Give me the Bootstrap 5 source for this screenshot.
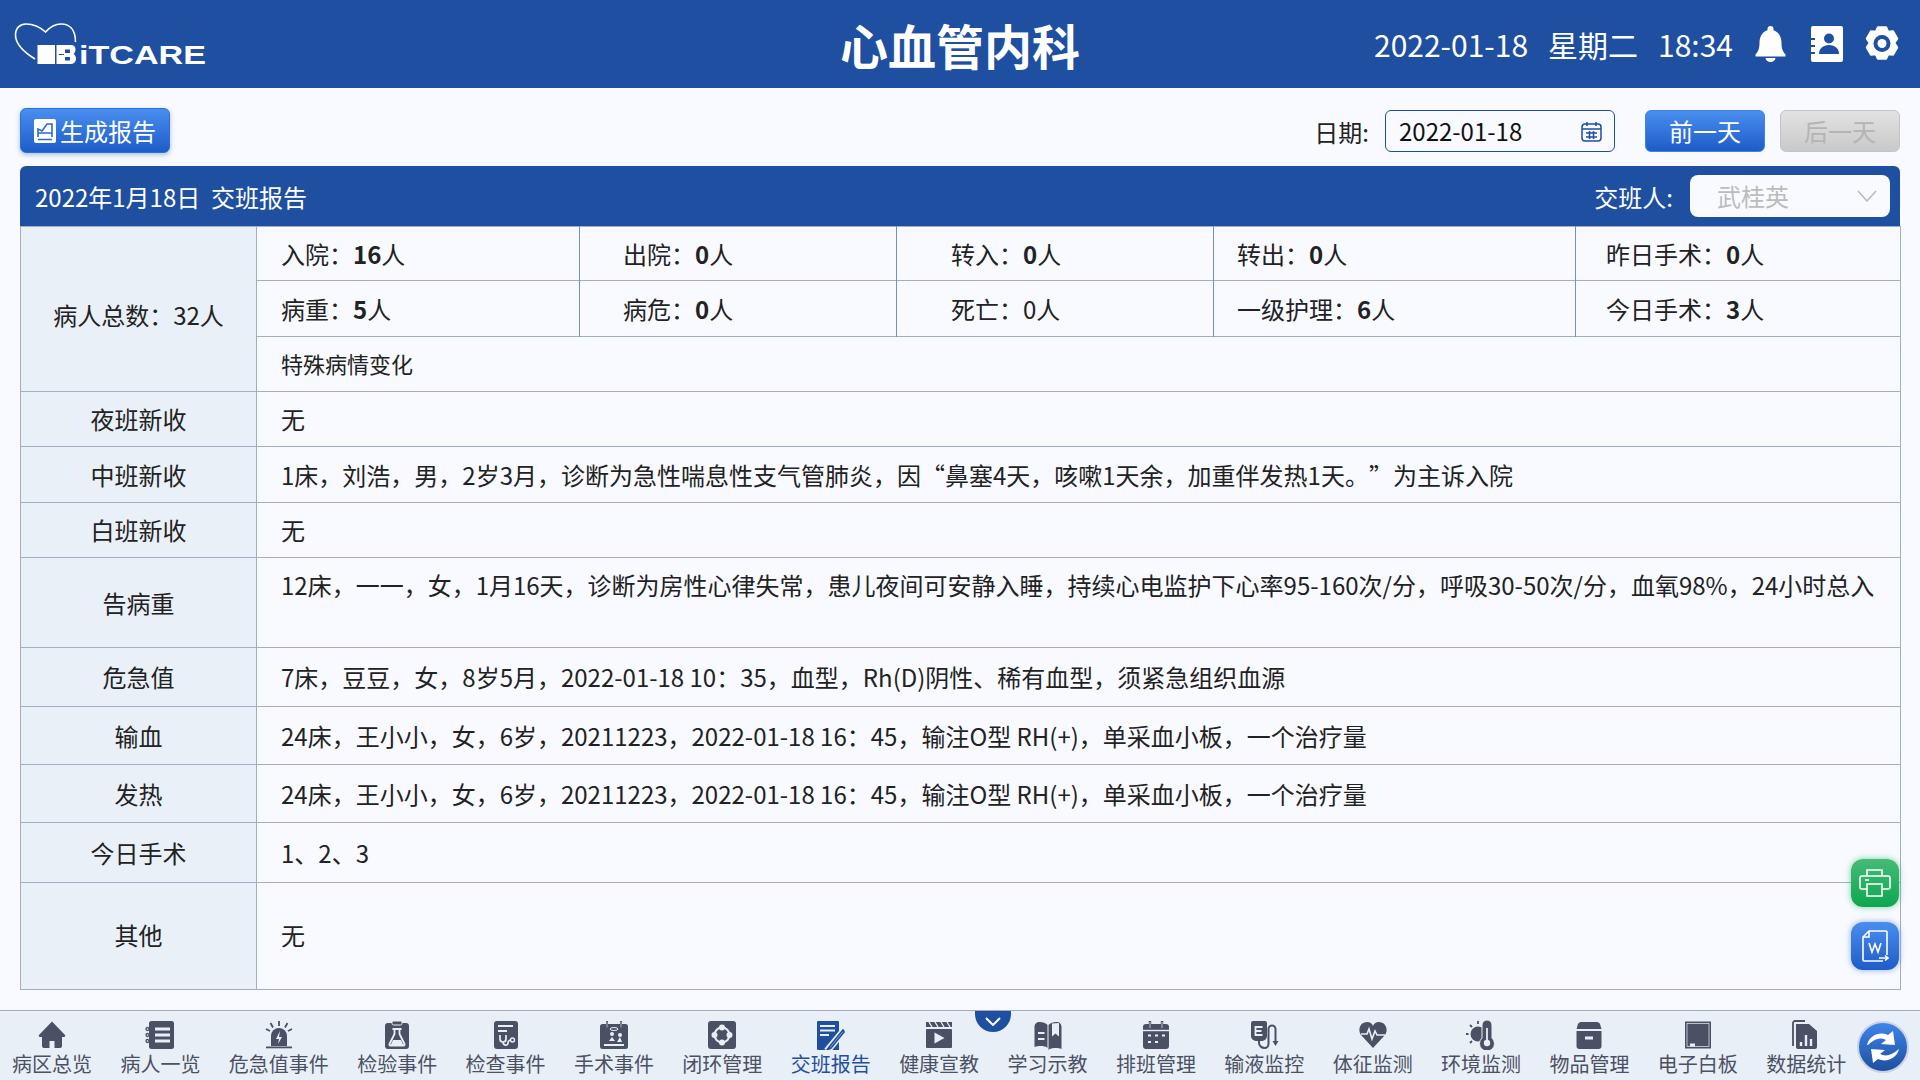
<!DOCTYPE html>
<html lang="zh-CN">
<head>
  <meta charset="UTF-8" />
  <meta name="viewport" content="width=device-width, initial-scale=1.0"/>
  <title>交班报告</title>
  <link href="https://cdn.jsdelivr.net/npm/bootstrap@5.3.0/dist/css/bootstrap.min.css" rel="stylesheet"/>
  <style>
    html, body {
      height: 100%;
    }

    body {
      font-family: "Noto Sans CJK SC", "Noto Sans", sans-serif;
      background-color: #f8faff;
      color: #222;
      font-size: 24px;
      overflow: hidden;
      text-spacing-trim: space-all;
    }

    .app-frame {
      width: 1920px;
      height: 1080px;
    }

    .top-bar {
      height: 88px;
      background-color: #1f4fa0;
      color: #fff;
      position: relative;
    }

    .logo-mark {
      display: block;
      position: absolute;
      left: 0;
      top: 0;
    }

    .page-title {
      font-size: 48px;
      font-weight: 700;
      line-height: 88px;
      width: 100%;
      text-align: center;
    }

    .top-info {
      position: absolute;
      right: 20px;
      top: 0;
      height: 88px;
      font-size: 30px;
    }

    .gap-bell { margin-left: 22px; }
    .gap-card { margin-left: 24px; }
    .gap-gear { margin-left: 21px; }

    .tool-row {
      height: 78px;
      padding: 20px 20px 0;
    }

    .report-btn {
      width: 150px;
      height: 45px;
      padding: 0;
      border: 1px solid #2c6fd8;
      border-radius: 6px;
      color: #fff;
      font-size: 24px;
      line-height: 1;
      background: linear-gradient(#4a8eef, #1c5cc8);
      box-shadow: 0 2px 5px rgba(30, 80, 160, .35);
    }

    .day-group {
      margin-top: 2px;
    }

    .day-label {
      padding-top: 2px;
    }

    .day-btn {
      width: 120px;
      height: 42px;
      padding: 0;
      border-radius: 6px;
      font-size: 24px;
      line-height: 1;
      color: #fff;
      border: 1px solid #3f83e6;
      background: linear-gradient(#4a8eef, #1c5cc8);
    }

    .day-btn:disabled {
      opacity: 1;
      color: #b4b4b4;
      border-color: #c4c4c4;
      background: linear-gradient(#e2e2e2, #c9c9c9);
    }

    .gap-prev { margin-left: 30px; }
    .gap-next { margin-left: 15px; }

    .date-box {
      position: relative;
      width: 230px;
      margin-left: 16px;
    }

    .date-box .form-control {
      height: 42px;
      padding: 0 0 2px 13px;
      font-size: 24px;
      color: #111;
      background-color: #f8faff;
      border: 1px solid #1f4fa0;
      border-radius: 6px;
    }

    .date-box svg {
      position: absolute;
      right: 13px;
      top: 11px;
    }

    .report-panel {
      margin: 0 20px;
    }

    .panel-head {
      height: 60px;
      padding: 0 10px 0 15px;
      background-color: #1f4fa0;
      border-radius: 6px 6px 0 0;
      color: #fff;
    }

    .head-label {
      padding-top: 2px;
    }

    .person-box {
      width: 200px;
      height: 42px;
      padding: 0 13px 0 27px;
      margin-left: 17px;
      color: #bcbcbc;
      background-color: #f8faff;
      border-radius: 8px;
    }

    .shift-table {
      table-layout: fixed;
      width: 1880px;
      margin: 0;
      font-size: 24px;
      --bs-table-bg: transparent;
      --bs-table-border-color: #a2aec4;
      --bs-table-color: #222;
    }

    .shift-table > tbody > tr > * {
      padding: 0 24px;
      vertical-align: middle;
      border-color: #a2aec4;
      line-height: 1.3;
    }

    .shift-table > tbody > tr > th {
      background-color: #e9f0f8;
      font-weight: 400;
      text-align: center;
      padding: 0;
    }

    .shift-table > tbody > tr > th.total-cell {
      padding-top: 12px;
    }

    .shift-table b {
      font-weight: 700;
    }

    .shift-table td.split {
      border-right-color: #6e92cb;
    }

    .shift-table > tbody > tr > td.pad-two { padding-left: 43px; }
    .shift-table > tbody > tr > td.pad-three { padding-left: 54px; }
    .shift-table > tbody > tr > td.pad-four { padding-left: 23px; }
    .shift-table > tbody > tr > td.pad-five { padding-left: 30px; }

    .shift-table > tbody > tr > td.note-cell {
      font-size: 22px;
      padding-bottom: 2px;
    }

    .shift-table > tbody > tr > td.top-cell {
      vertical-align: top;
      padding-top: 11px;
    }

    .shift-table > tbody > tr.last-row > * {
      padding-bottom: 3px;
    }

    .h-54 { height: 54px; }
    .h-55 { height: 55px; }
    .h-56 { height: 56px; }
    .h-58 { height: 58px; }
    .h-59 { height: 59px; }
    .h-60 { height: 60px; }
    .h-90 { height: 90px; }
    .h-107 { height: 107px; }

    .side-btn {
      position: absolute;
      left: 1851px;
      width: 48px;
      height: 48px;
      border-radius: 12px;
    }

    .side-print {
      top: 859px;
      background: linear-gradient(#45bb77, #0ea650);
      box-shadow: 0 0 6px rgba(20, 170, 90, .55);
    }

    .side-word {
      top: 922px;
      background: linear-gradient(#4a8eef, #1e5cc9);
      box-shadow: 0 0 6px rgba(50, 110, 220, .55);
    }

    .bottom-bar {
      position: absolute;
      left: 0;
      top: 1010px;
      width: 1920px;
      height: 70px;
      padding: 9px 0 0 12px;
      gap: 28.4px;
      background-color: #e8eff7;
      border-top: 1px solid #a2aac2;
    }

    .dock-item {
      color: #4b5164;
      font-size: 20px;
      line-height: 28px;
      white-space: nowrap;
    }

    .dock-item svg {
      display: block;
      margin: 0 auto;
    }

    .dock-item.current {
      color: #1f4fa0;
    }

    .drop-tab {
      position: absolute;
      left: 975px;
      top: 0;
      width: 36px;
      height: 21px;
      background-color: #1f4fa0;
      border-radius: 0 0 18px 18px;
    }

    .refresh-ball {
      position: absolute;
      left: 1857px;
      top: 10px;
      width: 52px;
      height: 52px;
      border-radius: 50%;
      border: 2px solid #c9d3e6;
      background: linear-gradient(#3d85e8, #1f4fa0);
    }
  </style>
</head>
<body>
  <div class="app-frame position-relative">
    <header class="top-bar">
      <svg class="logo-mark" width="215" height="80" viewBox="0 0 215 80">
        <path d="M35 59C22 51 15.500 44 15.500 35C15.500 28 20 24 26 24C34 24 40 27 45.500 32C50 27 54 24 61 24C69 24 75.500 29 75.500 42" fill="none" stroke="#fff" stroke-width="1.600"/>
        <rect x="37.500" y="45" width="17.500" height="19" fill="#fff"/>
        <path fill="#fff" fill-rule="evenodd" d="M56.500 45H71c3 0 4.500 2 4.500 4.500 0 2-1 3.500-2 4.500 1.500 1 2.500 2.500 2.500 4.500 0 3-2 5.500-5 5.500H56.500zM65 49.500v3.500h5v-3.500zM65 57v3.500h5V57zM59 54h5v1h-5z"/>
        <text x="79" y="64" font-family="Liberation Sans, sans-serif" font-weight="700" font-size="25" fill="#fff" textLength="127" lengthAdjust="spacingAndGlyphs">iTCARE</text>
      </svg>
      <div class="page-title">心血管内科</div>
      <div class="top-info d-flex align-items-center">
        <span>2022-01-18</span>
        <span class="ms-3 ps-1">星期二</span>
        <span class="ms-3 ps-1">18:34</span>
        <svg class="gap-bell" width="31" height="36" viewBox="0 0 31 36" fill="#fff">
          <path d="M15.500 0a3 3 0 0 1 3 3v1.300C24 6 26.500 11 26.500 17c0 6 1.500 8.500 4 11.500v2H.5v-2c2.500-3 4-5.500 4-11.500 0-6 2.500-11 8-12.700V3a3 3 0 0 1 3-3z"/>
          <path d="M10.500 32h10a5 4 0 0 1-10 0z"/>
        </svg>
        <svg class="gap-card" width="33" height="36" viewBox="0 0 33 36">
          <path fill="#fff" d="M3 0h28a2 2 0 0 1 2 2v32a2 2 0 0 1-2 2H3a2 2 0 0 1-2-2v-6h4v-2H1v-5h4v-2H1v-5h4v-2H1V2a2 2 0 0 1 2-2z"/>
          <circle cx="19" cy="12.500" r="5" fill="#1f4fa0"/>
          <path fill="#1f4fa0" d="M9 28c0-5.500 4-9 10-9s10 3.500 10 9z"/>
        </svg>
        <svg class="gap-gear" width="36" height="36" viewBox="0 0 36 36">
          <path fill="#fff" d="M14 1.500h8l2 4.500 5-.5 4 7-3 4.500 3 4.500-4 7-5-.5-2 4.500h-8l-2-4.500-5 .5-4-7 3-4.500-3-4.500 4-7 5 .5z" stroke="#fff" stroke-width="2.500" stroke-linejoin="round"/>
          <circle cx="18" cy="17.500" r="8.500" fill="#1f4fa0"/>
          <circle cx="18" cy="17.500" r="4.500" fill="#fff"/>
        </svg>
      </div>
    </header>

    <div class="tool-row d-flex align-items-start">
      <button class="btn report-btn d-flex align-items-center justify-content-center" type="button">
        <svg width="22" height="24" viewBox="0 0 22 24" class="me-1">
          <rect width="22" height="24" rx="2" fill="#fff"/>
          <path d="M4 18V10l4 2 5-7h5v13M4 20.500h14M4 14h14" fill="none" stroke="#2a6ad2" stroke-width="1.600"/>
        </svg>生成报告
      </button>
      <div class="day-group ms-auto d-flex align-items-center">
        <span class="day-label">日期:</span>
        <div class="date-box">
          <input class="form-control" type="text" value="2022-01-18" readonly/>
          <svg width="21" height="21" viewBox="0 0 21 21" fill="none" stroke="#1f4fa0" stroke-width="1.500">
            <rect x="1" y="3" width="19" height="17" rx="3"/>
            <path d="M1 8h19M6 1v4M15 1v4M5 12h11M5 16h11M8.500 10v8M12.500 10v8"/>
          </svg>
        </div>
        <button class="btn day-btn gap-prev" type="button">前一天</button>
        <button class="btn day-btn gap-next" type="button" disabled>后一天</button>
      </div>
    </div>

    <section class="report-panel">
      <div class="panel-head d-flex align-items-center justify-content-between">
        <span class="head-label">2022年1月18日&nbsp;&nbsp;交班报告</span>
        <div class="d-flex align-items-center">
          <span class="head-label">交班人:</span>
          <div class="person-box d-flex align-items-center justify-content-between">
            <span>武桂英</span>
            <svg width="20" height="12" viewBox="0 0 20 12" fill="none" stroke="#b9b9b9" stroke-width="1.500"><path d="M1 1l9 10 9-10"/></svg>
          </div>
        </div>
      </div>
      <table class="table table-bordered shift-table">
        <colgroup>
          <col style="width:236px"/><col style="width:323px"/><col style="width:317px"/><col style="width:317px"/><col style="width:362px"/><col style="width:325px"/>
        </colgroup>
        <tbody>
          <tr class="h-54">
            <th rowspan="3" class="total-cell">病人总数：32人</th>
            <td class="split">入院：<b>16</b>人</td>
            <td class="split pad-two">出院：<b>0</b>人</td>
            <td class="split pad-three">转入：<b>0</b>人</td>
            <td class="split pad-four">转出：<b>0</b>人</td>
            <td class="pad-five">昨日手术：<b>0</b>人</td>
          </tr>
          <tr class="h-56">
            <td class="split">病重：<b>5</b>人</td>
            <td class="split pad-two">病危：<b>0</b>人</td>
            <td class="split pad-three">死亡：0人</td>
            <td class="split pad-four">一级护理：<b>6</b>人</td>
            <td class="pad-five">今日手术：<b>3</b>人</td>
          </tr>
          <tr class="h-55"><td colspan="5" class="note-cell">特殊病情变化</td></tr>
          <tr class="h-55"><th>夜班新收</th><td colspan="5">无</td></tr>
          <tr class="h-56"><th>中班新收</th><td colspan="5">1床，刘浩，男，2岁3月，诊断为急性喘息性支气管肺炎，因“鼻塞4天，咳嗽1天余，加重伴发热1天。”为主诉入院</td></tr>
          <tr class="h-55"><th>白班新收</th><td colspan="5">无</td></tr>
          <tr class="h-90"><th>告病重</th><td colspan="5" class="top-cell">12床，一一，女，1月16天，诊断为房性心律失常，患儿夜间可安静入睡，持续心电监护下心率95-160次/分，呼吸30-50次/分，血氧98%，24小时总入</td></tr>
          <tr class="h-59"><th>危急值</th><td colspan="5">7床，豆豆，女，8岁5月，2022-01-18 10：35，血型，Rh(D)阴性、稀有血型，须紧急组织血源</td></tr>
          <tr class="h-58"><th>输血</th><td colspan="5">24床，王小小，女，6岁，20211223，2022-01-18 16：45，输注O型 RH(+)，单采血小板，一个治疗量</td></tr>
          <tr class="h-58"><th>发热</th><td colspan="5">24床，王小小，女，6岁，20211223，2022-01-18 16：45，输注O型 RH(+)，单采血小板，一个治疗量</td></tr>
          <tr class="h-60"><th>今日手术</th><td colspan="5">1、2、3</td></tr>
          <tr class="h-107 last-row"><th>其他</th><td colspan="5">无</td></tr>
        </tbody>
      </table>
    </section>

    <div class="side-btn side-print d-flex align-items-center justify-content-center">
      <svg width="32" height="28" viewBox="0 0 32 28" fill="none" stroke="#fff" stroke-width="1.600">
        <path d="M8 7V1h15v6M8 20H3a2 2 0 0 1-2-2V9a2 2 0 0 1 2-2h26a2 2 0 0 1 2 2v9a2 2 0 0 1-2 2h-5"/>
        <path d="M8 15h15v12H8zM6 11h4"/>
      </svg>
    </div>
    <div class="side-btn side-word d-flex align-items-center justify-content-center">
      <svg width="28" height="32" viewBox="0 0 28 32" fill="none" stroke="#fff" stroke-width="1.600">
        <path d="M26 25V2a1 1 0 0 0-1-1H8L2 7v23a1 1 0 0 0 1 1h19M8 1v6H2M8 13l3 9 3-8 3 8 3-9M18 28h9M24 25.500l3 2.500-3 2.500"/>
      </svg>
    </div>

    <nav class="bottom-bar d-flex">
      <div class="dock-item">
        <svg width="30" height="30" viewBox="0 0 30 30" fill="currentColor"><path d="M15 1.500L2 15c-.6 1 0 2 1 2h2v9a2 2 0 0 0 2 2h5.500v-7h5v7H23a2 2 0 0 0 2-2v-9h2c1 0 1.600-1 1-2z"/></svg>
        病区总览
      </div>
      <div class="dock-item">
        <svg width="30" height="30" viewBox="0 0 30 30"><rect x="4" y="1" width="25" height="28" rx="2.500" fill="currentColor"/><path d="M10 9h15M10 15h15M10 21h15" stroke="#e8eff7" stroke-width="3"/><g fill="none" stroke="currentColor" stroke-width="1.300"><circle cx="2.500" cy="9" r="1.500"/><circle cx="2.500" cy="15" r="1.500"/><circle cx="2.500" cy="21" r="1.500"/></g></svg>
        病人一览
      </div>
      <div class="dock-item">
        <svg width="30" height="30" viewBox="0 0 30 30" fill="currentColor"><path d="M15 1v5M6.500 3l2.500 4.500M23.500 3L21 7.500M2 9l4 2M28 9l-4 2" stroke="currentColor" stroke-width="1.800"/><path d="M15 8a8 8 0 0 1 8 8v10H7V16a8 8 0 0 1 8-8z"/><path d="M2 26.500h26v1.800H2z"/><path d="M16 11l-4 8h3l-1 5 4-7h-3z" fill="#e8eff7"/></svg>
        危急值事件
      </div>
      <div class="dock-item">
        <svg width="30" height="30" viewBox="0 0 30 30"><rect x="3" y="3" width="24" height="26" rx="3" fill="currentColor"/><rect x="10" y="1" width="10" height="4" rx="1.500" fill="currentColor" stroke="#e8eff7"/><path d="M10.500 9h9M12.500 9v5l-5 10a1 1 0 0 0 1 1.500h13a1 1 0 0 0 1-1.500l-5-10V9" fill="none" stroke="#e8eff7" stroke-width="1.800"/><path d="M11 20h8l2.500 5.500h-13z" fill="#e8eff7"/></svg>
        检验事件
      </div>
      <div class="dock-item">
        <svg width="30" height="30" viewBox="0 0 30 30"><rect x="3" y="1" width="24" height="28" rx="3" fill="currentColor"/><path d="M7 6h15M7 11h9" stroke="#e8eff7" stroke-width="2"/><path d="M9 15v4a3 3 0 0 0 6 0v-4M12 22c0 4 5 4 5 1 0-2 2-3 3-3" fill="none" stroke="#e8eff7" stroke-width="1.700"/><circle cx="21.500" cy="20" r="2" fill="none" stroke="#e8eff7" stroke-width="1.400"/></svg>
        检查事件
      </div>
      <div class="dock-item">
        <svg width="30" height="30" viewBox="0 0 30 30"><rect x="1" y="4" width="28" height="25" rx="2.500" fill="currentColor"/><path d="M8 1v7M22 1v7" stroke="currentColor" stroke-width="2"/><path d="M8 1.500v6M22 1.500v6" stroke="#e8eff7" stroke-width=".6"/><ellipse cx="15" cy="9" rx="4" ry="1.500" fill="none" stroke="#e8eff7"/><circle cx="13" cy="14" r="2" fill="#e8eff7"/><circle cx="21" cy="15" r="2" fill="#e8eff7"/><path d="M10 21l3-4 3 4zM18 22l3-5 2 5zM5 24h20v2H5z" fill="#e8eff7"/></svg>
        手术事件
      </div>
      <div class="dock-item">
        <svg width="30" height="30" viewBox="0 0 30 30"><rect x="1" y="1" width="28" height="28" rx="3" fill="currentColor"/><circle cx="15" cy="15" r="7.500" fill="none" stroke="#e8eff7" stroke-width="2"/><circle cx="15" cy="7.500" r="3" fill="#e8eff7"/><circle cx="15" cy="22.500" r="3" fill="#e8eff7"/><circle cx="7.500" cy="15" r="3" fill="#e8eff7"/><circle cx="22.500" cy="15" r="3" fill="#e8eff7"/></svg>
        闭环管理
      </div>
      <div class="dock-item current">
        <svg width="30" height="30" viewBox="0 0 30 30"><path d="M1 2a1 1 0 0 1 1-1h20a1 1 0 0 1 1 1v28H2a1 1 0 0 1-1-1z" fill="currentColor"/><path d="M4 6h15M4 10.500h15M4 15h9" stroke="#e8eff7" stroke-width="2"/><path d="M30 8L11 31" stroke="#e8eff7" stroke-width="7"/><path d="M27 10L14 26l-3 4 4-2 13-16z" fill="none" stroke="currentColor" stroke-width="1.700" stroke-linejoin="round"/></svg>
        交班报告
      </div>
      <div class="dock-item">
        <svg width="30" height="30" viewBox="0 0 30 30"><rect x="2" y="9" width="26" height="19" rx="1" fill="currentColor"/><rect x="2" y="2" width="26" height="5" fill="currentColor"/><path d="M5 2l3 5M11 2l3 5M17 2l3 5M23 2l3 5" stroke="#e8eff7" stroke-width="1.300"/><path d="M10.500 12.500v11l10-5.500z" fill="#e8eff7"/></svg>
        健康宣教
      </div>
      <div class="dock-item">
        <svg width="30" height="30" viewBox="0 0 30 30"><path d="M1.500 7c0-3 2-5 5-5 4 0 7 1.500 8 3v23c-1-1.500-4-2-8-2-2 0-5 1-5 1z" fill="currentColor"/><path d="M15.500 5c1-1.500 4-3 8-3 3 0 5 2 5 5v22s-3-1-5-1c-4 0-7 .5-8 2z" fill="currentColor"/><path d="M5 13h6.500M5 19h6.500" stroke="#e8eff7" stroke-width="2"/><path d="M19 3.500v13l3.500-3 3.500 3v-13.500" fill="#e8eff7"/></svg>
        学习示教
      </div>
      <div class="dock-item">
        <svg width="30" height="30" viewBox="0 0 30 30"><rect x="2" y="4" width="26" height="25" rx="3" fill="currentColor"/><path d="M9 1v7M21 1v7" stroke="currentColor" stroke-width="2.400"/><path d="M9 2v6M21 2v6" stroke="#e8eff7" stroke-width=".7"/><path d="M2 10.500h26" stroke="#e8eff7" stroke-width="1.400"/><path d="M7 15.500h3M14 15.500h3M21 15.500h3M7 22h3M14 22h3" stroke="#e8eff7" stroke-width="2"/></svg>
        排班管理
      </div>
      <div class="dock-item">
        <svg width="30" height="30" viewBox="0 0 30 30"><path d="M4 1h12a2 2 0 0 1 2 2v13c0 3-3 5-6 5H8c-3 0-6-2-6-5V3a2 2 0 0 1 2-2z" fill="currentColor"/><path d="M13.500 7H6.500v8h7M6.500 11h6" fill="none" stroke="#e8eff7" stroke-width="1.800"/><path d="M10 21v2c0 3 3 5 5.500 5s4-2 4-4V9a3.500 3.500 0 0 1 7 0v13" fill="none" stroke="currentColor" stroke-width="2"/><path d="M23.500 21h6l-3 5z" fill="currentColor"/></svg>
        输液监控
      </div>
      <div class="dock-item">
        <svg width="30" height="30" viewBox="0 0 30 30"><path d="M15 28L3 15C-1 9 3 2 9 2c3 0 5 1.500 6 4 1-2.500 3-4 6-4 6 0 10 7 6 13z" fill="currentColor"/><path d="M3 14h6l2-5 3 10 3-8 2 4h8" fill="none" stroke="#e8eff7" stroke-width="1.600"/></svg>
        体征监测
      </div>
      <div class="dock-item">
        <svg width="30" height="30" viewBox="0 0 30 30"><circle cx="12" cy="14" r="7.500" fill="currentColor"/><path d="M0 14h2.500M12 1v3M4 5l2 2M4 23l2-2" stroke="currentColor" stroke-width="1.800"/><path d="M16 5a5 5 0 0 1 10 0v13a7.500 7.500 0 1 1-10 0z" fill="currentColor" stroke="#e8eff7"/><circle cx="21" cy="23" r="3.200" fill="#e8eff7"/><path d="M21 8v14" stroke="#e8eff7" stroke-width="1.800"/></svg>
        环境监测
      </div>
      <div class="dock-item">
        <svg width="30" height="30" viewBox="0 0 30 30" fill="currentColor"><path d="M7 2h16c1.500 0 2.500 1 3 2l1.500 5h-25L4 4c.5-1 1.500-2 3-2z"/><path d="M2.500 11h25v15a3 3 0 0 1-3 3h-19a3 3 0 0 1-3-3z"/><rect x="11" y="16.500" width="8" height="3" fill="#e8eff7"/></svg>
        物品管理
      </div>
      <div class="dock-item">
        <svg width="30" height="30" viewBox="0 0 30 30"><rect x="2.500" y="2" width="25" height="26" fill="currentColor" stroke="currentColor"/><rect x="4" y="3.500" width="22" height="23" fill="currentColor" stroke="#e8eff7" stroke-width=".7"/><rect x="7" y="23.500" width="5" height="3" fill="#e8eff7"/></svg>
        电子白板
      </div>
      <div class="dock-item">
        <svg width="30" height="30" viewBox="0 0 30 30"><path d="M2 26V3a2 2 0 0 1 2-2h10" fill="none" stroke="currentColor" stroke-width="1.800"/><path d="M5 4h13l8 7v16a2 2 0 0 1-2 2H7a2 2 0 0 1-2-2z" fill="currentColor"/><path d="M10 26v-4M15 26V15M20 26v-7" stroke="#e8eff7" stroke-width="2.400"/></svg>
        数据统计
      </div>
      <div class="drop-tab d-flex align-items-center justify-content-center">
        <svg width="16" height="9" viewBox="0 0 16 9" fill="none" stroke="#fff" stroke-width="2"><path d="M1 1l7 7 7-7"/></svg>
      </div>
      <div class="refresh-ball d-flex align-items-center justify-content-center">
        <svg width="40" height="40" viewBox="0 0 40 40" fill="#fff">
          <path d="M4 18C6 9 16 4 25 8l5-4 2 14-14-1 5-4c-6-3-12-1-18 5z"/>
          <path d="M36 22c-2 9-12 14-21 10l-5 4-2-14 14 1-5 4c6 3 12 1 19-5z"/>
        </svg>
      </div>
    </nav>
  </div>
  <script src="https://cdn.jsdelivr.net/npm/bootstrap@5.3.0/dist/js/bootstrap.bundle.min.js"></script>
</body>
</html>
